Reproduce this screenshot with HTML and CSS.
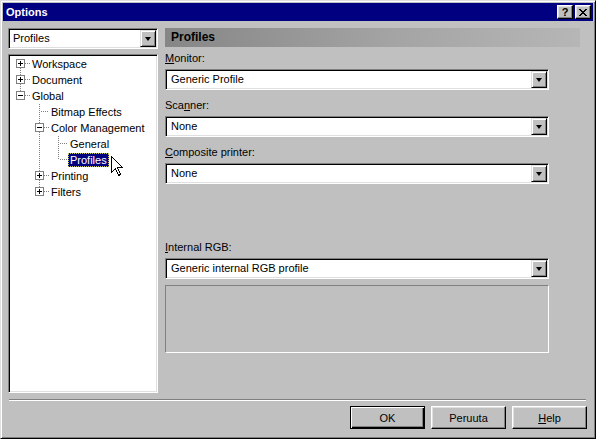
FILE: index.html
```html
<!DOCTYPE html>
<html>
<head>
<meta charset="utf-8">
<link rel="stylesheet" href="styles.css">
</head>
<body>
<div class="window">
  <div class="titlebar">
    <span class="title">Options</span>
    <div class="tbtns">
      <div class="tbtn"><span class="q">?</span></div>
      <div class="tbtn">
        <svg width="10" height="9" viewBox="0 0 10 9" shape-rendering="crispEdges"><path d="M1 1h2v1h1v1h2v-1h1v-1h2v1h-1v1h-1v1h-1v1h1v1h1v1h1v1h-2v-1h-1v-1h-2v1h-1v1h-2v-1h1v-1h1v-1h1v-1h-1v-1h-1v-1h-1z" fill="#000"/></svg>
      </div>
    </div>
  </div>

  <div class="main">
    <div class="leftcol">
      <div class="combo">
        <span class="ctext">Profiles</span>
        <div class="dbtn"><span class="arrow"></span></div>
      </div>
      <div class="tree">
        <div class="row">
          <svg class="cell" width="19" height="16"><path class="dot" d="M9.5 12V16M14 7.5H19"/><rect x="5.5" y="3.5" width="8" height="8" class="box"/><path class="pm" d="M7 7.5h5M9.5 5v5"/></svg>
          <span class="lbl">Workspace</span>
        </div>
        <div class="row">
          <svg class="cell" width="19" height="16"><path class="dot" d="M9.5 0V3M9.5 12V16M14 7.5H19"/><rect x="5.5" y="3.5" width="8" height="8" class="box"/><path class="pm" d="M7 7.5h5M9.5 5v5"/></svg>
          <span class="lbl">Document</span>
        </div>
        <div class="row">
          <svg class="cell" width="19" height="16"><path class="dot" d="M9.5 0V3M14 7.5H19"/><rect x="5.5" y="3.5" width="8" height="8" class="box"/><path class="pm" d="M7 7.5h5"/></svg>
          <span class="lbl">Global</span>
        </div>
        <div class="row">
          <span class="blank"></span>
          <svg class="cell" width="19" height="16"><path class="dot" d="M9.5 0V16M11 7.5H19"/></svg>
          <span class="lbl">Bitmap Effects</span>
        </div>
        <div class="row">
          <span class="blank"></span>
          <svg class="cell" width="19" height="16"><path class="dot" d="M9.5 0V3M9.5 12V16M14 7.5H19"/><rect x="5.5" y="3.5" width="8" height="8" class="box"/><path class="pm" d="M7 7.5h5"/></svg>
          <span class="lbl">Color Management</span>
        </div>
        <div class="row">
          <span class="blank"></span>
          <svg class="cell" width="19" height="16"><path class="dot" d="M9.5 0V16"/></svg>
          <svg class="cell" width="19" height="16"><path class="dot" d="M9.5 0V16M11 7.5H19"/></svg>
          <span class="lbl">General</span>
        </div>
        <div class="row">
          <span class="blank"></span>
          <svg class="cell" width="19" height="16"><path class="dot" d="M9.5 0V16"/></svg>
          <svg class="cell" width="19" height="16"><path class="dot" d="M9.5 0V8M11 7.5H19"/></svg>
          <span class="lbl sel">Profiles</span>
          <svg class="cursor" width="13" height="21" viewBox="0 0 13 21" shape-rendering="crispEdges"><path d="M0.5 0.5V16.5L4.5 12.5L7.5 19.5L9.5 18.5L6.5 11.5H11.5Z" fill="#fff" stroke="#000" stroke-linejoin="miter"/></svg>
        </div>
        <div class="row">
          <span class="blank"></span>
          <svg class="cell" width="19" height="16"><path class="dot" d="M9.5 0V3M9.5 12V16M14 7.5H19"/><rect x="5.5" y="3.5" width="8" height="8" class="box"/><path class="pm" d="M7 7.5h5M9.5 5v5"/></svg>
          <span class="lbl">Printing</span>
        </div>
        <div class="row">
          <span class="blank"></span>
          <svg class="cell" width="19" height="16"><path class="dot" d="M9.5 0V3M14 7.5H19"/><rect x="5.5" y="3.5" width="8" height="8" class="box"/><path class="pm" d="M7 7.5h5M9.5 5v5"/></svg>
          <span class="lbl">Filters</span>
        </div>
      </div>
    </div>

    <div class="rightcol">
      <div class="header">Profiles</div>
      <div class="fields">
        <div class="field">
          <div class="label"><u>M</u>onitor:</div>
          <div class="combo wide"><span class="ctext">Generic Profile</span><div class="dbtn"><span class="arrow"></span></div></div>
        </div>
        <div class="field">
          <div class="label">Sca<u>n</u>ner:</div>
          <div class="combo wide"><span class="ctext">None</span><div class="dbtn"><span class="arrow"></span></div></div>
        </div>
        <div class="field">
          <div class="label"><u>C</u>omposite printer:</div>
          <div class="combo wide"><span class="ctext">None</span><div class="dbtn"><span class="arrow"></span></div></div>
        </div>
        <div class="field rgb">
          <div class="label"><u>I</u>nternal RGB:</div>
          <div class="combo wide"><span class="ctext">Generic internal RGB profile</span><div class="dbtn"><span class="arrow"></span></div></div>
        </div>
        <div class="infobox"></div>
      </div>
    </div>
  </div>

  <div class="separator"></div>

  <div class="buttons">
    <div class="btn default"><span>OK</span></div>
    <div class="btn"><span>Peruuta</span></div>
    <div class="btn"><span><u>H</u>elp</span></div>
  </div>
</div>
</body>
</html>
```

FILE: styles.css
```css
html, body {
  margin: 0;
  padding: 0;
  background: #c0c0c0;
}
body {
  width: 596px;
  height: 439px;
  overflow: hidden;
  font-family: "Liberation Sans", Arial, sans-serif;
  font-size: 11px;
  color: #000;
}
.window {
  box-sizing: border-box;
  width: 596px;
  height: 439px;
  border: 1px solid;
  border-color: #dfdfdf #000 #000 #dfdfdf;
  box-shadow: inset 1px 1px #fff, inset -1px -1px #808080;
  padding: 2px;
  display: flex;
  flex-direction: column;
}
.titlebar {
  height: 18px;
  background: #000080;
  display: flex;
  align-items: center;
  justify-content: space-between;
  padding: 0 2px 0 3px;
}
.title {
  color: #fff;
  font-weight: bold;
  font-size: 11px;
}
.tbtns {
  display: flex;
  gap: 2px;
}
.tbtn {
  box-sizing: border-box;
  width: 16px;
  height: 14px;
  background: #c0c0c0;
  border: 1px solid;
  border-color: #fff #000 #000 #fff;
  box-shadow: inset -1px -1px #808080, inset 1px 1px #dfdfdf;
  display: flex;
  align-items: center;
  justify-content: center;
}
.tbtn svg { display: block; }
.q {
  font-weight: bold;
  font-size: 11px;
  line-height: 11px;
  margin-top: 1px;
}
.main {
  margin-top: 7px;
  height: 365px;
  display: flex;
  gap: 7px;
  padding: 0 7px 0 5px;
}
.leftcol {
  width: 150px;
  display: flex;
  flex-direction: column;
}
.combo {
  box-sizing: border-box;
  height: 21px;
  background: #fff;
  border: 1px solid;
  border-color: #808080 #fff #fff #808080;
  box-shadow: inset 1px 1px #000, inset -1px -1px #dfdfdf;
  padding: 2px;
  display: flex;
  align-items: stretch;
}
.ctext {
  flex: 1;
  padding-left: 2px;
  line-height: 15px;
  white-space: nowrap;
  overflow: hidden;
}
.dbtn {
  box-sizing: border-box;
  width: 16px;
  background: #c0c0c0;
  border: 1px solid;
  border-color: #dfdfdf #000 #000 #dfdfdf;
  box-shadow: inset 1px 1px #fff, inset -1px -1px #808080;
  display: flex;
  align-items: center;
  justify-content: center;
  margin: -1px -1px -1px 0;
}
.arrow {
  width: 0;
  height: 0;
  border-left: 3.5px solid transparent;
  border-right: 3.5px solid transparent;
  border-top: 4px solid #000;
  margin-top: 1px;
}
.tree {
  margin-top: 5px;
  box-sizing: border-box;
  height: 339px;
  background: #fff;
  border: 1px solid;
  border-color: #808080 #fff #fff #808080;
  box-shadow: inset 1px 1px #000, inset -1px -1px #dfdfdf;
  padding: 1px 1px 1px 2px;
}
.row {
  height: 16px;
  display: flex;
  align-items: center;
  position: relative;
}
.cell { display: block; flex: none; }
.blank { width: 19px; flex: none; }
.dot {
  fill: none;
  stroke: #808080;
  stroke-width: 1;
  stroke-dasharray: 1 1;
  shape-rendering: crispEdges;
}
.box {
  fill: #fff;
  stroke: #808080;
  shape-rendering: crispEdges;
}
.pm {
  fill: none;
  stroke: #000;
  shape-rendering: crispEdges;
}
.lbl {
  padding: 0 2px;
  height: 14px;
  line-height: 14px;
  white-space: nowrap;
  box-sizing: border-box;
}
.lbl.sel {
  background: #000080;
  color: #fff;
  outline: 1px dotted #c8c860;
  outline-offset: -1px;
}
.cursor {
  position: absolute;
  left: 100px;
  top: 4px;
}
.rightcol {
  flex: 1;
  display: flex;
  flex-direction: column;
}
.header {
  height: 19px;
  margin-right: 6px;
  background: linear-gradient(to right, #868686 0%, #a4a4a4 55%, #b6b6b6 100%);
  font-weight: bold;
  font-size: 12px;
  line-height: 19px;
  padding-left: 6px;
}
.fields {
  width: 384px;
  display: flex;
  flex-direction: column;
  gap: 9px;
  margin-top: 5px;
}
.field {
  display: flex;
  flex-direction: column;
  gap: 4px;
}
.label {
  height: 13px;
  line-height: 13px;
  white-space: nowrap;
}
.combo.wide .ctext { padding-left: 3px; }
.field.rgb { margin-top: 48px; }
.infobox {
  box-sizing: border-box;
  height: 68px;
  margin-top: -3px;
  border: 1px solid;
  border-color: #808080 #fff #fff #808080;
}
.separator {
  margin: 6px 7px 0 6px;
  height: 2px;
  border-top: 1px solid #808080;
  border-bottom: 1px solid #fff;
  box-sizing: border-box;
}
.buttons {
  margin-top: 5px;
  display: flex;
  justify-content: flex-end;
  gap: 6px;
  padding-right: 6px;
}
.btn {
  box-sizing: border-box;
  width: 75px;
  height: 23px;
  background: #c0c0c0;
  border: 1px solid;
  border-color: #fff #000 #000 #fff;
  box-shadow: inset -1px -1px #808080, inset 1px 1px #dfdfdf;
  display: flex;
  align-items: center;
  justify-content: center;
}
.btn.default {
  border: 1px solid #000;
  box-shadow: inset 1px 1px #fff, inset -1px -1px #000, inset -2px -2px #808080;
}
```
